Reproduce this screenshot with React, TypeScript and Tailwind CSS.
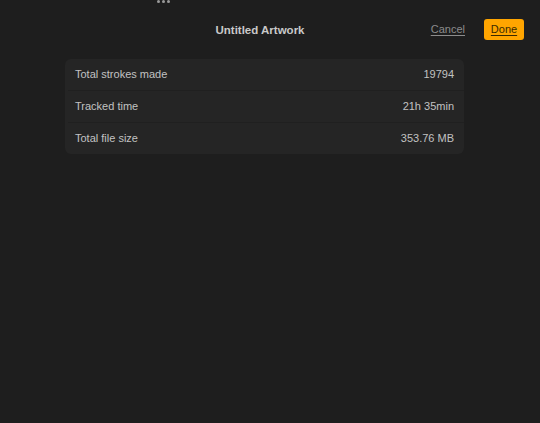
import React from 'react'

const rows = [
  { label: 'Total strokes made', value: '19794' },
  { label: 'Tracked time', value: '21h 35min' },
  { label: 'Total file size', value: '353.76 MB' },
]

export default function App() {
  return (
    <div className="relative w-[540px] h-[423px] bg-[#1e1e1e] overflow-hidden font-['Liberation_Sans',Arial,sans-serif]">
      {/* grabber dots */}
      <div className="absolute left-[157px] top-[0px] flex gap-[2px]">
        <span className="w-[3px] h-[3px] rounded-full bg-[#9a9a9a]" />
        <span className="w-[3px] h-[3px] rounded-full bg-[#9a9a9a]" />
        <span className="w-[3px] h-[3px] rounded-full bg-[#9a9a9a]" />
      </div>

      {/* header */}
      <div className="relative h-[59px] flex items-center justify-center pr-[20px]">
        <div className="text-[11.5px] font-bold text-[#c9c9c9] mt-[2px]">Untitled Artwork</div>
        <div className="absolute right-[16px] top-[19px] flex items-center gap-[19px]">
          <span className="text-[11px] text-[#8c8c8c] underline underline-offset-2">Cancel</span>
          <span className="h-[21px] w-[40px] rounded-[3px] bg-[#ffa500] flex items-center justify-center text-[11px] text-[#3a2a00] underline underline-offset-2">
            Done
          </span>
        </div>
      </div>

      {/* stats card */}
      <div className="ml-[65px] w-[399px] rounded-[6px] bg-[#252525] overflow-hidden">
        {rows.map((r, i) => (
          <div key={i}>
            {i > 0 && <div className="ml-[3px] h-px bg-[#202020]" />}
            <div className="h-[31px] flex items-center justify-between px-[10px] text-[11px] text-[#c2c2c2]">
              <span>{r.label}</span>
              <span>{r.value}</span>
            </div>
          </div>
        ))}
      </div>
    </div>
  )
}
